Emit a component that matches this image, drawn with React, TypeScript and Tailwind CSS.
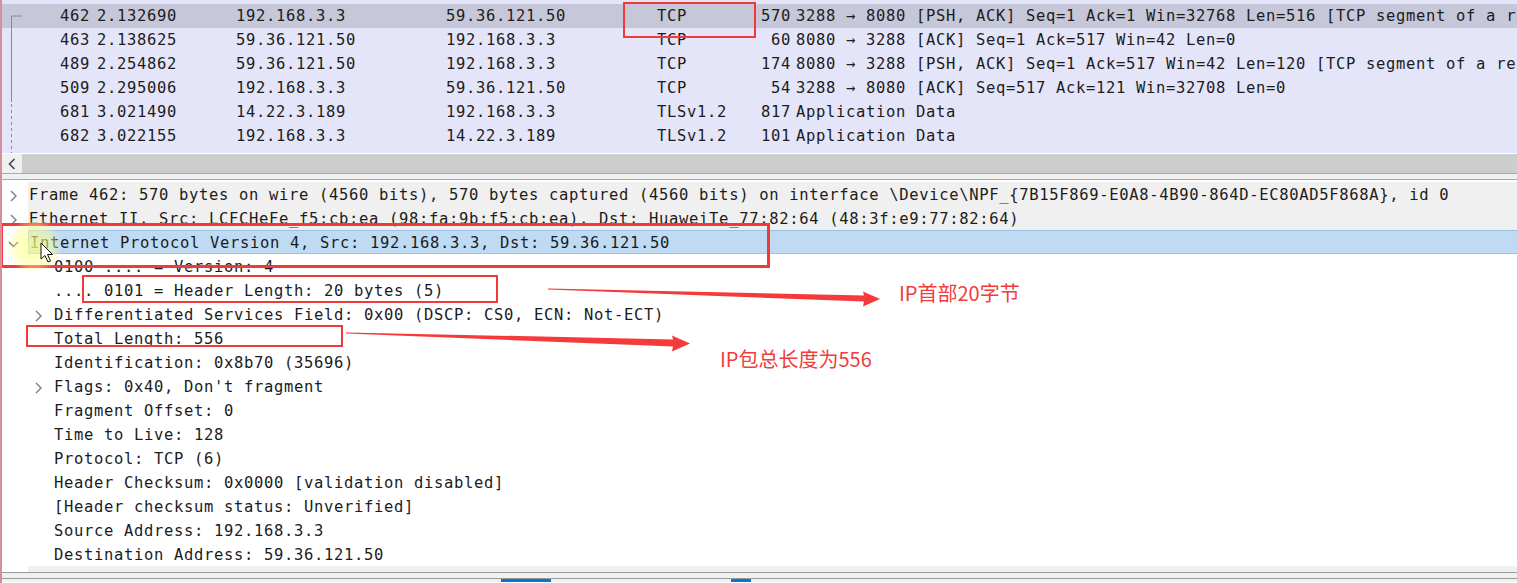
import React from 'react';

type Packet = {
  no: string;
  time: string;
  src: string;
  dst: string;
  proto: string;
  len: string;
  info: string;
  selected?: boolean;
};

const packets: Packet[] = [
  { no: '461', time: '2.132511', src: '59.36.121.50', dst: '192.168.3.3', proto: 'TCP', len: '60', info: '8080 → 3288 [ACK] Seq=1 Ack=1 Win=42 Len=0' },
  { no: '462', time: '2.132690', src: '192.168.3.3', dst: '59.36.121.50', proto: 'TCP', len: '570', info: '3288 → 8080 [PSH, ACK] Seq=1 Ack=1 Win=32768 Len=516 [TCP segment of a reassembled PDU]', selected: true },
  { no: '463', time: '2.138625', src: '59.36.121.50', dst: '192.168.3.3', proto: 'TCP', len: '60', info: '8080 → 3288 [ACK] Seq=1 Ack=517 Win=42 Len=0' },
  { no: '489', time: '2.254862', src: '59.36.121.50', dst: '192.168.3.3', proto: 'TCP', len: '174', info: '8080 → 3288 [PSH, ACK] Seq=1 Ack=517 Win=42 Len=120 [TCP segment of a reassembled PDU]' },
  { no: '509', time: '2.295006', src: '192.168.3.3', dst: '59.36.121.50', proto: 'TCP', len: '54', info: '3288 → 8080 [ACK] Seq=517 Ack=121 Win=32708 Len=0' },
  { no: '681', time: '3.021490', src: '14.22.3.189', dst: '192.168.3.3', proto: 'TLSv1.2', len: '817', info: 'Application Data' },
  { no: '682', time: '3.022155', src: '192.168.3.3', dst: '14.22.3.189', proto: 'TLSv1.2', len: '101', info: 'Application Data' },
  { no: '683', time: '3.062418', src: '192.168.3.3', dst: '14.22.3.189', proto: 'TCP', len: '54', info: '3290 → 443 [ACK] Seq=1 Ack=764 Win=32512 Len=0' },
];

type Node = {
  text: string;
  level: 0 | 1;
  arrow?: 'right' | 'down';
  selected?: boolean;
};

const details: Node[] = [
  { level: 0, arrow: 'right', text: 'Frame 462: 570 bytes on wire (4560 bits), 570 bytes captured (4560 bits) on interface \\Device\\NPF_{7B15F869-E0A8-4B90-864D-EC80AD5F868A}, id 0' },
  { level: 0, arrow: 'right', text: 'Ethernet II, Src: LCFCHeFe_f5:cb:ea (98:fa:9b:f5:cb:ea), Dst: HuaweiTe_77:82:64 (48:3f:e9:77:82:64)' },
  { level: 0, arrow: 'down', selected: true, text: 'Internet Protocol Version 4, Src: 192.168.3.3, Dst: 59.36.121.50' },
  { level: 1, text: '0100 .... = Version: 4' },
  { level: 1, text: '.... 0101 = Header Length: 20 bytes (5)' },
  { level: 1, arrow: 'right', text: 'Differentiated Services Field: 0x00 (DSCP: CS0, ECN: Not-ECT)' },
  { level: 1, text: 'Total Length: 556' },
  { level: 1, text: 'Identification: 0x8b70 (35696)' },
  { level: 1, arrow: 'right', text: "Flags: 0x40, Don't fragment" },
  { level: 1, text: 'Fragment Offset: 0' },
  { level: 1, text: 'Time to Live: 128' },
  { level: 1, text: 'Protocol: TCP (6)' },
  { level: 1, text: 'Header Checksum: 0x0000 [validation disabled]' },
  { level: 1, text: '[Header checksum status: Unverified]' },
  { level: 1, text: 'Source Address: 192.168.3.3' },
  { level: 1, text: 'Destination Address: 59.36.121.50' },
  { level: 0, arrow: 'right', text: 'Transmission Control Protocol, Src Port: 3288, Dst Port: 8080, Seq: 1, Ack: 1, Len: 516' },
];

const Chevron = ({ dir }: { dir: 'right' | 'down' }) =>
  dir === 'right' ? (
    <svg width="7" height="12" viewBox="0 0 7 12" className="shrink-0">
      <polyline points="1,1 6,6 1,11" fill="none" stroke="#7c7c7c" strokeWidth="1.4" />
    </svg>
  ) : (
    <svg width="11" height="7" viewBox="0 0 11 7" className="shrink-0">
      <polyline points="1,1 5.5,5.5 10,1" fill="none" stroke="#5c5c5c" strokeWidth="1.4" />
    </svg>
  );

const PacketRow = ({ p }: { p: Packet }) => (
  <div className={`flex h-[24px] items-center overflow-hidden whitespace-nowrap pt-[2px] ${p.selected ? 'bg-[#c7c7da]' : ''}`}>
    <div className="w-[95px] shrink-0 pr-[7px] text-right">{p.no}</div>
    <div className="w-[139px] shrink-0">{p.time}</div>
    <div className="w-[210px] shrink-0">{p.src}</div>
    <div className="w-[211px] shrink-0">{p.dst}</div>
    <div className="w-[103px] shrink-0">{p.proto}</div>
    <div className="w-[31px] shrink-0 text-right">{p.len}</div>
    <div className="pl-[5px]">{p.info}</div>
  </div>
);

const DetailRow = ({ n }: { n: Node }) => {
  const bg = n.selected
    ? 'bg-[#bfdbf3] border-y border-l border-[#99c3e6]'
    : n.level === 0
      ? 'bg-[#f0f0f0]'
      : '';
  return (
    <div className="flex h-[24px] items-stretch whitespace-nowrap">
      <div className={`flex w-[26px] shrink-0 items-center pt-[4px] ${n.arrow === 'down' ? 'pl-[6px]' : 'pl-[8px]'}`}>
        {n.level === 0 && n.arrow && <Chevron dir={n.arrow} />}
      </div>
      <div className={`flex flex-1 items-center pt-[4px] ${bg}`}>
        {n.level === 1 && (
          <div className="flex w-[23px] shrink-0 items-center pl-[7px]">
            {n.arrow && <Chevron dir={n.arrow} />}
          </div>
        )}
        <span className={n.level === 1 ? 'pl-[3px]' : 'pl-[1px]'}>{n.text}</span>
      </div>
    </div>
  );
};

export default function App() {
  return (
    <div className="relative h-[583px] w-[1517px] overflow-hidden border-l-2 border-[#d88d9b] bg-white font-['DejaVu_Sans_Mono',monospace] text-[15.5px] tracking-[0.67px] text-[#1c1c1c]">
      {/* packet list */}
      <div className="relative h-[153px] overflow-hidden bg-[#e5e5f9]">
        <div className="-mt-[20px]">
          {packets.map((p) => (
            <PacketRow key={p.no} p={p} />
          ))}
        </div>
        <svg className="pointer-events-none absolute left-0 top-0" width="30" height="153">
          <polyline points="20,16 9.5,16 9.5,102" fill="none" stroke="#8a8a8a" strokeWidth="1" />
          <line x1="9.5" y1="104" x2="9.5" y2="153" stroke="#8a8a8a" strokeWidth="1" strokeDasharray="3,3" />
        </svg>
      </div>

      {/* horizontal scrollbar */}
      <div className="flex h-[20px] border-t border-white bg-[#cdcdcd]">
        <div className="flex w-[20px] items-center justify-center bg-[#f0f0f0]">
          <svg width="8" height="12" viewBox="0 0 8 12">
            <polyline points="6.5,1 1.5,6 6.5,11" fill="none" stroke="#444" strokeWidth="1.6" />
          </svg>
        </div>
      </div>
      <div className="h-[7px] border-y border-[#a8a8a8] bg-[#f0f0f0]" />

      {/* packet details */}
      <div className="h-[392px] overflow-hidden pt-[2px]">
        {details.map((n, i) => (
          <DetailRow key={i} n={n} />
        ))}
      </div>
      <div className="h-[7px] border-y border-[#9a9a9a] bg-[#f0f0f0]" />
      <div className="flex h-[3px] bg-[#f0f0f0]">
        <div className="ml-[499px] w-[50px] bg-[#0a74d4]" />
        <div className="ml-[180px] w-[20px] bg-[#0a74d4]" />
      </div>

      {/* annotations */}
      <div className="pointer-events-none absolute left-[621px] top-[2px] h-[36px] w-[133px] border-2 border-[#f03a3a]" />
      <div className="pointer-events-none absolute left-[-2px] top-[223px] h-[45px] w-[770px] border-[3px] border-[#f03a3a]" />
      <div className="pointer-events-none absolute left-[80px] top-[275px] h-[28px] w-[416px] border-2 border-[#f03a3a]" />
      <div className="pointer-events-none absolute left-[24px] top-[325px] h-[22px] w-[317px] border-2 border-[#f03a3a]" />

      <svg className="pointer-events-none absolute left-0 top-0" width="1517" height="583">
        <defs>
          <radialGradient id="hl">
            <stop offset="0%" stopColor="#ffff80" stopOpacity="0.75" />
            <stop offset="70%" stopColor="#ffff90" stopOpacity="0.45" />
            <stop offset="100%" stopColor="#ffffa0" stopOpacity="0" />
          </radialGradient>
        </defs>
        <circle cx="32" cy="246" r="28" fill="url(#hl)" />
        <polygon points="546,288.4 862,295.6 861,291.5 878,299 861,306.5 862,301.6 546,289.6" fill="#f43a3a" />
        <polygon points="344,332.4 671,339.4 670,335.5 688,343.5 670,351.5 671,346.6 344,333.6" fill="#f43a3a" />
        <polygon points="39,243 39,259 43,255.5 46,262 48.5,261 45.5,254.5 50.5,254.5" fill="#fff" stroke="#111" strokeWidth="1" strokeLinejoin="round" />
      </svg>

      <div className="pointer-events-none absolute left-[897px] top-[280px] font-['Noto_Sans_CJK_SC',sans-serif] text-[20px] leading-[26px] tracking-normal text-[#f23b3b]">
        IP首部20字节
      </div>
      <div className="pointer-events-none absolute left-[718px] top-[346px] font-['Noto_Sans_CJK_SC',sans-serif] text-[20px] leading-[26px] tracking-normal text-[#f23b3b]">
        IP包总长度为556
      </div>
    </div>
  );
}
